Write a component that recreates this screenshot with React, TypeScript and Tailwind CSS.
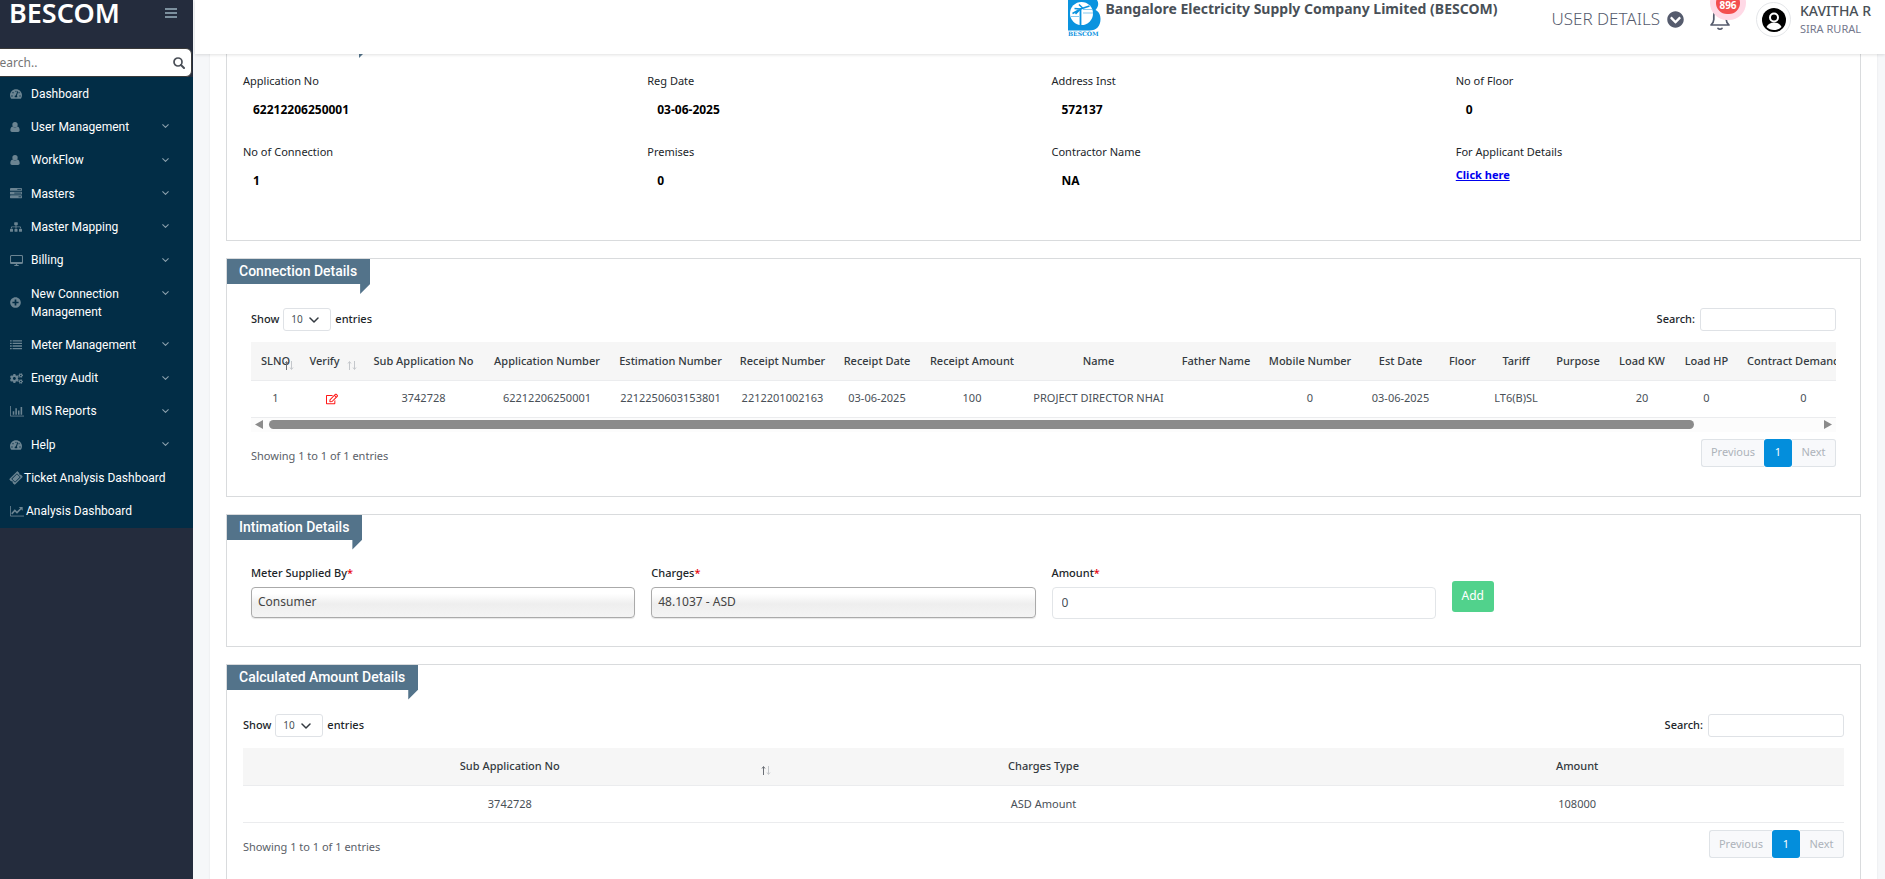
import React from 'react';
import clsx from 'clsx';
import {
  FaChevronCircleDown,
  FaCogs,
  FaPlusCircle,
  FaRegEdit,
  FaSitemap,
  FaTachometerAlt,
  FaTicketAlt,
} from 'react-icons/fa';

type IconProps = { className?: string };

const UserIcon = ({ className }: IconProps) => (
  <svg viewBox="0 0 12 12" fill="currentColor" className={className}>
    <circle cx="6" cy="3.200" r="3.200" />
    <path d="M3 5.500c1.800 1.600 4.200 1.600 6 0 2 .5 2.600 2.500 2.600 4.500 0 1.200-.8 2-1.900 2H2.300C1.200 12 .4 11.200.4 10c0-2 .6-4 2.600-4.500z" />
  </svg>
);

const TasksIcon = ({ className }: IconProps) => (
  <svg viewBox="0 0 14 12" className={className}>
    <g fill="currentColor">
      <rect width="14" height="3.300" y="0" rx=".5" />
      <rect width="14" height="3.300" y="4.300" rx=".5" />
      <rect width="14" height="3.300" y="8.600" rx=".5" />
    </g>
    <path d="M8.500 1.650h4.500M5 5.950h8M10 10.250h3" stroke="#022d46" strokeWidth=".9" />
  </svg>
);

const DesktopIcon = ({ className }: IconProps) => (
  <svg viewBox="0 0 15 13" fill="none" stroke="currentColor" className={className}>
    <rect x=".6" y=".6" width="13.800" height="9.300" rx="1" strokeWidth="1.200" />
    <path d="M1 8.800h13M5 12.200h5M7.500 10v2" strokeWidth="1.600" />
  </svg>
);

const ListIcon = ({ className }: IconProps) => (
  <svg viewBox="0 0 14 11" stroke="currentColor" className={className}>
    <path d="M0 1h2M3 1h11M0 4h2M3 4h11M0 7h2M3 7h11M0 10h2M3 10h11" strokeWidth="1.600" />
  </svg>
);

const BarChartIcon = ({ className }: IconProps) => (
  <svg viewBox="0 0 16 12" fill="none" stroke="currentColor" className={className}>
    <path d="M.5 0v11.500H16" />
    <path d="M4 10V6M7 10V2.500M10 10V5M13 10V1" strokeWidth="1.800" />
  </svg>
);

const LineChartIcon = ({ className }: IconProps) => (
  <svg viewBox="0 0 16 12" fill="none" stroke="currentColor" className={className}>
    <path d="M.5 0v11.500H16" />
    <path d="M2 9l3.500-4 2.500 2.500L13 2.500" strokeWidth="1.800" />
    <path d="M10 1h4.500v4.500z" fill="currentColor" stroke="none" />
  </svg>
);

const ChevronIcon = ({ className }: IconProps) => (
  <svg viewBox="0 0 10 6" fill="none" stroke="currentColor" className={className}>
    <path d="M1 1l4 4 4-4" strokeWidth="1.500" strokeLinecap="round" strokeLinejoin="round" />
  </svg>
);

const SearchIcon = ({ className }: IconProps) => (
  <svg viewBox="0 0 12 12" fill="none" stroke="currentColor" className={className}>
    <circle cx="5" cy="5" r="4" strokeWidth="1.700" />
    <path d="M8 8l3 3" strokeWidth="2" strokeLinecap="round" />
  </svg>
);

const BellIcon = ({ className }: IconProps) => (
  <svg viewBox="0 0 20 22" fill="none" stroke="currentColor" strokeWidth="1.700" className={className}>
    <path
      d="M1 17h18c-1.500-1.500-2.800-3-2.800-5.500V7.500a6.200 6.200 0 0 0-12.400 0v4c0 2.500-1.300 4-2.800 5.500z"
      strokeLinejoin="round"
    />
    <path d="M8 20.300c1 1 3 1 4 0" strokeLinecap="round" />
  </svg>
);

const AvatarIcon = ({ className }: IconProps) => (
  <svg viewBox="0 0 24 24" className={className}>
    <circle cx="12" cy="12" r="12" fill="#000" />
    <circle cx="12" cy="9.500" r="4" fill="none" stroke="#fff" strokeWidth="2" />
    <path d="M4.500 19c1.500-3 4-4.500 7.500-4.500s6 1.500 7.500 4.500c-2 2-4.500 3-7.500 3s-5.500-1-7.500-3z" fill="#fff" />
  </svg>
);

const BrandLogo = ({ className }: IconProps) => (
  <svg viewBox="0 0 33 36" className={className}>
    <path d="M0 0h29c2 3 1.500 7-1.500 10 4 2 5 5.500 5 9 0 7-4 11.500-11 11.500H0z" fill="#0a93df" />
    <circle cx="13.500" cy="13.500" r="11.500" fill="#fff" />
    <g fill="none" stroke="#0a93df">
      <path d="M12.500 8v17" strokeWidth="1.800" />
      <path d="M4.500 13.500l8-4.500 9-3M6.500 8.500l6 .5M11 4.500l4 4M12.500 9l-5 5" strokeWidth="1.500" />
      <path d="M15 9.500h9M15 13h10M3 16.500h8" strokeWidth=".5" />
    </g>
    <text x="0" y="35.500" fontSize="6" fontWeight="900" fill="#0a93df" fontFamily="DejaVu Serif">
      BESCOM
    </text>
  </svg>
);

const menu = [
  { label: 'Dashboard', icon: <FaTachometerAlt className="size-3" /> },
  { label: 'User Management', icon: <UserIcon className="size-[10px]" />, sub: true },
  { label: 'WorkFlow', icon: <UserIcon className="size-[10px]" />, sub: true },
  { label: 'Masters', icon: <TasksIcon className="w-3" />, sub: true },
  { label: 'Master Mapping', icon: <FaSitemap className="size-3" />, sub: true },
  { label: 'Billing', icon: <DesktopIcon className="w-[13px]" />, sub: true },
  { label: 'New Connection Management', icon: <FaPlusCircle className="size-[11px]" />, sub: true },
  { label: 'Meter Management', icon: <ListIcon className="w-3" />, sub: true },
  { label: 'Energy Audit', icon: <FaCogs className="size-[13px]" />, sub: true },
  { label: 'MIS Reports', icon: <BarChartIcon className="w-[14px]" />, sub: true },
  { label: 'Help', icon: <FaTachometerAlt className="size-3" />, sub: true },
  { label: 'Ticket Analysis Dashboard', icon: <FaTicketAlt className="size-3 -rotate-45" />, tight: true },
  { label: 'Analysis Dashboard', icon: <LineChartIcon className="w-[14px]" />, tight: true },
];

const connectionColumns = [
  { name: 'SLNO', width: 'w-[49px]', value: '1', sort: 'asc' },
  { name: 'Verify', width: 'w-[63px]', value: 'edit', sort: 'none' },
  { name: 'Sub Application No', width: 'w-[121px]', value: '3742728' },
  { name: 'Application Number', width: 'w-[126px]', value: '62212206250001' },
  { name: 'Estimation Number', width: 'w-[121px]', value: '2212250603153801' },
  { name: 'Receipt Number', width: 'w-[103px]', value: '2212201002163' },
  { name: 'Receipt Date', width: 'w-[86px]', value: '03-06-2025' },
  { name: 'Receipt Amount', width: 'w-[104px]', value: '100' },
  { name: 'Name', width: 'w-[149px]', value: 'PROJECT DIRECTOR NHAI' },
  { name: 'Father Name', width: 'w-[86px]', value: '' },
  { name: 'Mobile Number', width: 'w-[102px]', value: '0' },
  { name: 'Est Date', width: 'w-[79px]', value: '03-06-2025' },
  { name: 'Floor', width: 'w-[45px]', value: '' },
  { name: 'Tariff', width: 'w-[62px]', value: 'LT6(B)SL' },
  { name: 'Purpose', width: 'w-[62px]', value: '' },
  { name: 'Load KW', width: 'w-[66px]', value: '20' },
  { name: 'Load HP', width: 'w-[63px]', value: '0' },
  { name: 'Contract Demand', width: 'w-[131px]', value: '0' },
];

const SortArrows = ({ active }: { active?: boolean }) => (
  <svg
    viewBox="0 0 10 9"
    fill="none"
    className="absolute right-[6px] bottom-[10px] h-[9px] w-[10px]"
  >
    <path d="M2.500 9V1M1 2.500l1.500-2 1.500 2" stroke={active ? '#6b6f76' : '#c4c7cb'} />
    <path d="M7.500 0v8M6 6.500l1.500 2 1.500-2" stroke="#c4c7cb" />
  </svg>
);

function Panel({
  title,
  className,
  children,
}: {
  title?: string;
  className?: string;
  children: React.ReactNode;
}) {
  return (
    <section className={clsx('border border-[#d9dbdd] bg-white', className)}>
      <div className="flex">
        <h2
          className={clsx(
            'relative h-[25px] bg-[#53738a] pr-[13px] pl-3 font-[Roboto] text-sm leading-[24px] font-medium text-white',
            !title && 'w-[142px]',
          )}
        >
          {title}
          <span className="absolute top-full right-0 size-[10px] bg-[#53738a] [clip-path:polygon(0_0,100%_0,0_100%)]" />
        </h2>
      </div>
      {children}
    </section>
  );
}

function TableTools({ id }: { id: string }) {
  return (
    <div className="flex items-center justify-between font-medium text-[#212529]">
      <div className="flex items-center gap-1">
        <label htmlFor={`${id}-length`}>Show</label>
        <span className="relative">
          <select
            id={`${id}-length`}
            className="block h-[23px] w-12 appearance-none rounded-[3px] border border-[#dfe2e6] bg-white pl-[7px] text-[10px] font-normal text-[#495057]"
          >
            <option>10</option>
          </select>
          <ChevronIcon className="pointer-events-none absolute top-[9px] right-3 w-[10px] text-[#343a40]" />
        </span>
        <span>entries</span>
      </div>
      <div className="flex items-center gap-[5px]">
        <label htmlFor={`${id}-search`}>Search:</label>
        <input
          id={`${id}-search`}
          type="search"
          className="h-[23px] w-[136px] rounded-[3px] border border-[#dfe2e6] px-2 font-normal"
        />
      </div>
    </div>
  );
}

function TableFooter() {
  return (
    <div className="flex items-start justify-between">
      <p className="pt-2 leading-[18px] text-[#5a6068]">Showing 1 to 1 of 1 entries</p>
      <div className="flex text-[#adb3ba]">
        <button
          type="button"
          disabled
          className="h-7 w-[63px] rounded-l-[3px] border border-r-0 border-[#dfe3e7] bg-[#f8f9fb]"
        >
          Previous
        </button>
        <button type="button" className="h-7 w-7 rounded-[3px] bg-[#038edc] text-white">
          1
        </button>
        <button
          type="button"
          disabled
          className="h-7 w-11 rounded-r-[3px] border border-l-0 border-[#dfe3e7] bg-[#f8f9fb]"
        >
          Next
        </button>
      </div>
    </div>
  );
}

function Sidebar() {
  return (
    <aside className="flex w-[193px] shrink-0 flex-col bg-[#242c3d]">
      <div className="flex h-12 items-start justify-between pr-4 pl-[9px]">
        <span className="-mt-[5px] text-[27px] leading-9 font-semibold text-white">BESCOM</span>
        <button type="button" aria-label="Toggle menu" className="mt-2 flex w-3 flex-col gap-[2px]">
          <span className="h-[2px] bg-[#7c909e]" />
          <span className="h-[2px] bg-[#7c909e]" />
          <span className="h-[2px] bg-[#7c909e]" />
        </button>
      </div>
      <div className="-ml-2 mr-px flex h-[29px] items-center rounded-r-md border border-[#3a3a3a] bg-white pr-[6px]">
        <input
          type="text"
          aria-label="Search menu"
          placeholder="Search.."
          className="min-w-0 flex-1 text-xs text-gray-700 outline-none placeholder:text-[#757575]"
        />
        <SearchIcon className="size-3 text-[#4a4f57]" />
      </div>
      <nav className="flex min-h-[451px] flex-col bg-[#022d46] font-[Roboto] text-xs leading-[18px] text-white">
        {menu.map(({ label, icon, sub, tight }) => (
          <a
            key={label}
            href="#"
            className={clsx('flex flex-auto items-center py-[7px] pr-6 pl-[10px]', tight ? 'gap-[2px]' : '')}
          >
            <span className={clsx('flex shrink-0 text-[#6b8492]', !tight && 'w-[21px]')}>{icon}</span>
            <span className={clsx('flex-1', tight ? 'whitespace-nowrap' : 'pr-6')}>{label}</span>
            {sub && <ChevronIcon className="mt-[7px] w-[7px] self-start text-[#8ba0ad]" />}
          </a>
        ))}
      </nav>
    </aside>
  );
}

function TopBar() {
  return (
    <header className="relative z-10 flex h-[54px] shrink-0 items-start justify-end bg-white pr-3 shadow-[0_1px_3px_rgba(0,0,0,0.12)]">
      <BrandLogo className="h-9 w-[33px]" />
      <h1 className="pl-1 text-sm leading-[18px] font-bold text-[#495057]">
        Bangalore Electricity Supply Company Limited (BESCOM)
      </h1>
      <button type="button" className="ml-[54px] flex h-[38px] items-center gap-[7px] text-[#555b6d]">
        <span className="text-[17px] font-light">USER DETAILS</span>
        <FaChevronCircleDown className="size-[17px]" />
      </button>
      <button type="button" aria-label="Notifications" className="relative mt-2 ml-[26px] text-[#555b6d]">
        <BellIcon className="w-5" />
        <span className="absolute -top-4 left-[6px] flex h-[22px] w-6 items-center justify-center rounded-full bg-[#f34e4e] pt-1 text-[10px] font-bold text-white ring-6 ring-[#ffd9e6]">
          896
        </span>
      </button>
      <span className="mt-[2px] ml-[26px] flex size-[35px] items-center justify-center rounded-full border border-[#e4e6e9]">
        <AvatarIcon className="size-6" />
      </span>
      <div className="ml-[9px] w-[73px] whitespace-nowrap pt-[2px]">
        <p className="text-sm leading-[18px] font-medium text-[#495057]">KAVITHA R</p>
        <p className="text-[11px] leading-[18px] text-[#74788d]">SIRA RURAL</p>
      </div>
    </header>
  );
}

function Field({ label, value }: { label: string; value: string }) {
  return (
    <div className="px-2 leading-[18px]">
      <p className="text-[#212529]">{label}</p>
      <p className="mt-[11px] pl-[10px] text-xs leading-[18px] font-bold text-black">{value}</p>
    </div>
  );
}

const Required = () => <span className="text-red-600">*</span>;

const selectBox =
  'block h-[31px] w-full appearance-none rounded-[4px] border border-[#aaa] bg-linear-to-b from-white from-20% via-[#eeeeee] via-55% to-[#f4f4f4] px-[6px] text-xs font-normal text-[#444] shadow-[0_1px_1px_rgba(0,0,0,0.1)]';

export default function App() {
  return (
    <div className="flex h-screen overflow-hidden bg-[#f6f7f9] font-['Noto_Sans','Open_Sans',sans-serif] text-[11px]">
      <Sidebar />
      <div className="flex min-w-0 flex-1 flex-col pl-[2px]">
        <TopBar />
        <main className="-mt-8 mr-2 ml-[15px] flex-1 bg-white px-4 shadow-[0_0_2px_rgba(0,0,0,0.08)]">
          <Panel className="h-[219px]">
            <div className="grid grid-cols-4 gap-y-[24px] px-2 pt-6">
              <Field label="Application No" value="62212206250001" />
              <Field label="Reg Date" value="03-06-2025" />
              <Field label="Address Inst" value="572137" />
              <Field label="No of Floor" value="0" />
              <Field label="No of Connection" value="1" />
              <Field label="Premises" value="0" />
              <Field label="Contractor Name" value="NA" />
              <div className="px-2 leading-[18px]">
                <p className="text-[#212529]">For Applicant Details</p>
                <a href="#" className="mt-[5px] inline-block font-bold text-[#0000ee] underline">
                  Click here
                </a>
              </div>
            </div>
          </Panel>

          <Panel title="Connection Details" className="mt-[17px]">
            <div className="px-6 pt-6 pb-[29px]">
              <TableTools id="connection" />
              <div className="mt-[11px] overflow-hidden">
                <table className="w-[1618px] table-fixed border-collapse text-center whitespace-nowrap">
                  <thead>
                    <tr className="h-[38px] border-b border-[#ebecee] bg-[#f6f6f6]">
                      {connectionColumns.map(({ name, width, sort }) => (
                        <th
                          key={name}
                          className={clsx(
                            'relative font-medium text-[#343a40]',
                            width,
                            name === 'Verify' && 'pr-[14px]',
                            name === 'Contract Demand' && 'pr-5',
                          )}
                        >
                          {name}
                          {sort && <SortArrows active={sort === 'asc'} />}
                        </th>
                      ))}
                    </tr>
                  </thead>
                  <tbody>
                    <tr className="h-[37px] border-b border-[#ebecee] text-[#495057]">
                      {connectionColumns.map(({ name, value }) => (
                        <td key={name}>
                          {value === 'edit' ? (
                            <button type="button" aria-label="Verify" className="align-middle text-[#ff1717]">
                              <FaRegEdit className="size-3" />
                            </button>
                          ) : (
                            value
                          )}
                        </td>
                      ))}
                    </tr>
                  </tbody>
                </table>
                <div className="flex h-[14px] items-center bg-[#fcfcfc] px-1">
                  <span className="h-[9px] w-2 bg-[#8b8b8b] [clip-path:polygon(100%_0,100%_100%,0_50%)]" />
                  <span className="mx-[6px] flex-1">
                    <span className="block h-[9px] w-[92%] rounded-full bg-[#8b8b8b]" />
                  </span>
                  <span className="h-[9px] w-2 bg-[#8b8b8b] [clip-path:polygon(0_0,100%_50%,0_100%)]" />
                </div>
              </div>
              <div className="mt-[7px]">
                <TableFooter />
              </div>
            </div>
          </Panel>

          <Panel title="Intimation Details" className="mt-[17px]">
            <form className="grid grid-cols-4 px-4 pt-6 pb-[27px] font-medium text-[#212529]">
              <div className="px-2">
                <label htmlFor="meter" className="mb-[5px] block leading-[18px]">
                  Meter Supplied By
                  <Required />
                </label>
                <select id="meter" className={selectBox}>
                  <option>Consumer</option>
                </select>
              </div>
              <div className="px-2">
                <label htmlFor="charges" className="mb-[5px] block leading-[18px]">
                  Charges
                  <Required />
                </label>
                <select id="charges" className={selectBox}>
                  <option>48.1037 - ASD</option>
                </select>
              </div>
              <div className="px-2">
                <label htmlFor="amount" className="mb-[5px] block leading-[18px]">
                  Amount
                  <Required />
                </label>
                <input
                  id="amount"
                  type="text"
                  defaultValue="0"
                  className="block h-8 w-full rounded-[4px] border border-[#e2e5e8] px-[9px] text-xs font-normal text-[#495057]"
                />
              </div>
              <div className="px-2 pt-[17px]">
                <button
                  type="button"
                  className="h-[31px] w-[42px] rounded-[3px] bg-[#51d28c] text-xs font-normal text-white"
                >
                  Add
                </button>
              </div>
            </form>
          </Panel>

          <Panel title="Calculated Amount Details" className="mt-[17px] h-[260px]">
            <div className="px-4 pt-6">
              <TableTools id="amounts" />
              <table className="mt-[11px] mb-[7px] w-full table-fixed border-collapse text-center">
                <thead>
                  <tr className="h-[38px] border-b border-[#ebecee] bg-[#f6f6f6] text-[#343a40]">
                    <th className="relative font-medium">
                      Sub Application No
                      <SortArrows active />
                    </th>
                    <th className="font-medium">Charges Type</th>
                    <th className="font-medium">Amount</th>
                  </tr>
                </thead>
                <tbody>
                  <tr className="h-[37px] border-b border-[#ebecee] text-[#495057]">
                    <td>3742728</td>
                    <td>ASD Amount</td>
                    <td>108000</td>
                  </tr>
                </tbody>
              </table>
              <TableFooter />
            </div>
          </Panel>
        </main>
      </div>
    </div>
  );
}
